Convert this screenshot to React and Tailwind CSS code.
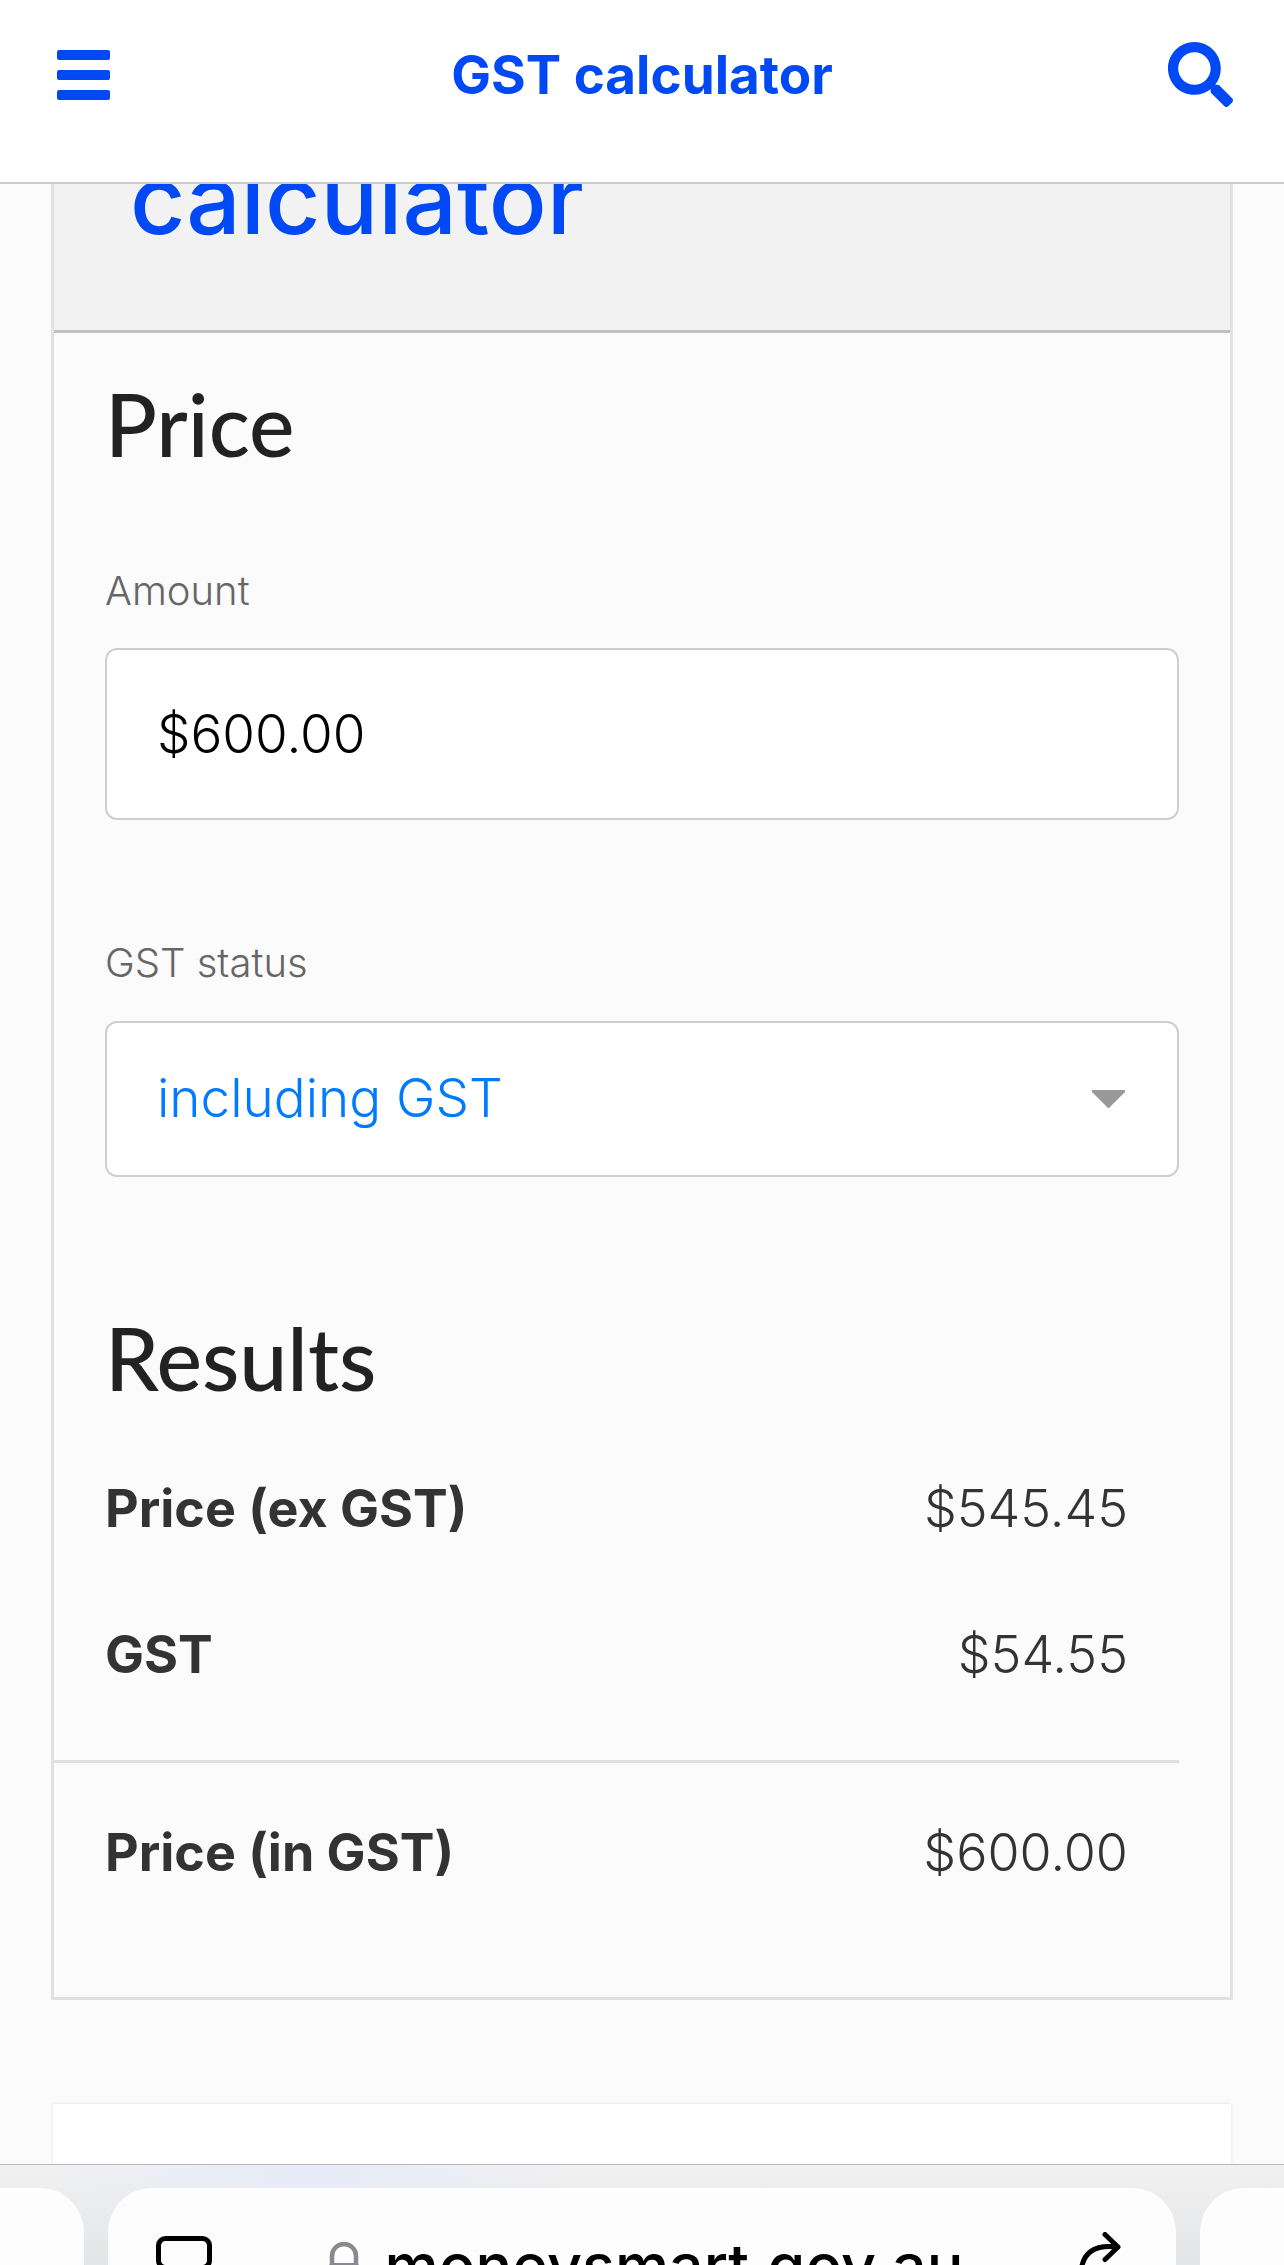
import { useState } from "react";
import { FaSearch } from "react-icons/fa";

const GST_RATE = 0.1;

function money(value) {
  return `$${value.toFixed(2)}`;
}

function Header() {
  return (
    <header className="grid shrink-0 grid-cols-[1fr_auto_1fr] items-center border-b-2 border-[#cccccc] bg-white px-[51px] pt-[42px] pb-[75px] text-[#0049f5]">
      <button type="button" aria-label="Menu" className="ml-1.5 justify-self-start">
        <svg width="53" height="50" viewBox="0 0 53 50" fill="currentColor">
          <rect width="53" height="10" rx="2" />
          <rect y="20" width="53" height="10" rx="2" />
          <rect y="40" width="53" height="10" rx="2" />
        </svg>
      </button>
      <p className="text-[53px] leading-[60px] font-bold">GST calculator</p>
      <button type="button" aria-label="Search" className="justify-self-end">
        <FaSearch className="size-[65px]" />
      </button>
    </header>
  );
}

function SectionTitle({ children }) {
  return (
    <h2 className="px-[51px] font-['Lato',sans-serif] text-[86px] leading-[96px] font-medium text-[#222222]">
      {children}
    </h2>
  );
}

function ResultsTable({ exGst, gst, inGst }) {
  return (
    <table className="mt-[71px] mr-[51px] mb-28 w-[calc(100%-51px)] border-collapse text-[52px] leading-[64px] text-[#333333]">
      <tbody>
        <tr>
          <th scope="row" className="pb-[41px] pl-[51px] text-left font-bold">Price (ex GST)</th>
          <td className="pr-[51px] pb-[41px] text-right font-light">{money(exGst)}</td>
        </tr>
        <tr>
          <th scope="row" className="pt-[41px] pb-[73px] pl-[51px] text-left font-bold">GST</th>
          <td className="pt-[41px] pr-[51px] pb-[73px] text-right font-light">{money(gst)}</td>
        </tr>
        <tr className="border-t-3 border-[#e1e1e1]">
          <th scope="row" className="pt-[58px] pl-[51px] text-left font-bold">Price (in GST)</th>
          <td className="pt-[58px] pr-[51px] text-right font-light">{money(inGst)}</td>
        </tr>
      </tbody>
    </table>
  );
}

function Calculator() {
  const [amount, setAmount] = useState("$600.00");
  const [status, setStatus] = useState("including");

  const price = parseFloat(amount.replace(/[^0-9.]/g, "")) || 0;
  const exGst = status === "including" ? price / (1 + GST_RATE) : price;
  const inGst = status === "including" ? price : price * (1 + GST_RATE);

  return (
    <section className="-mt-[33px] border-3 border-t-0 border-[#e1e1e1]">
      <div className="border-b-3 border-[#c0c0c0] bg-[#f2f2f2] px-[76px] pb-[83px]">
        <h1 className="text-[96px] leading-[96px] font-medium text-[#0049f5]">calculator</h1>
      </div>

      <div className="pt-[43px]">
        <SectionTitle>Price</SectionTitle>

        <form className="px-[51px]" onSubmit={(e) => e.preventDefault()}>
          <label htmlFor="amount" className="mt-[95px] block text-[40px] leading-[48px] font-light text-[#666666]">
            Amount
          </label>
          <input
            id="amount"
            inputMode="decimal"
            value={amount}
            onChange={(e) => setAmount(e.target.value)}
            className="mt-[33px] block h-[172px] w-full rounded-xl border-2 border-[#cfcfcf] bg-white px-[50px] text-[53px] font-light text-black focus:outline-none"
          />

          <label htmlFor="status" className="mt-[119px] block text-[40px] leading-[48px] font-light text-[#666666]">
            GST status
          </label>
          <div className="relative mt-[34px]">
            <select
              id="status"
              value={status}
              onChange={(e) => setStatus(e.target.value)}
              className="block h-[156px] w-full appearance-none rounded-xl border-2 border-[#cfcfcf] bg-white px-[50px] text-[53px] font-light text-[#007aff] focus:outline-none"
            >
              <option value="including">including GST</option>
              <option value="excluding">excluding GST</option>
            </select>
            <svg
              className="pointer-events-none absolute top-[69px] right-[54px]"
              width="33"
              height="18"
              viewBox="0 0 33 18"
              fill="#999999"
            >
              <path d="M0 0h33v2L17 18h-1L0 2z" />
            </svg>
          </div>
        </form>

        <div className="mt-[133px]">
          <SectionTitle>Results</SectionTitle>
        </div>
        <ResultsTable exGst={exGst} gst={inGst - exGst} inGst={inGst} />
      </div>
    </section>
  );
}

function AddressBar() {
  return (
    <footer className="flex h-[101px] shrink-0 gap-6 overflow-hidden border-t border-[#b9b9bd] bg-[radial-gradient(ellipse_260px_90px_at_24%_0%,#e6ebf8,transparent),linear-gradient(#f1f1f2,#e4e5e6)] pt-[23px]">
      <div className="h-36 w-[84px] shrink-0 rounded-tr-[44px] bg-[#fdfdfe]" />
      <div className="flex h-36 flex-1 items-start justify-between rounded-t-[44px] bg-[#fdfdfe] px-12">
        <button type="button" aria-label="Page settings" className="mt-12">
          <svg width="56" height="60" viewBox="0 0 56 60" fill="none" stroke="#000" strokeWidth="5" strokeLinecap="round">
            <rect x="2.5" y="2.5" width="51" height="29" rx="7" />
            <path d="M3 44h50M3 55h32" />
          </svg>
        </button>
        <div className="flex items-start gap-6">
          <svg className="mt-[54px]" width="34" height="54" viewBox="0 0 34 54">
            <path d="M5 26V14a12 12 0 0 1 24 0v12" fill="none" stroke="#8a8a8e" strokeWidth="4.5" />
            <rect x="1" y="21" width="32" height="28" rx="5" fill="#8a8a8e" />
          </svg>
          <a href="https://moneysmart.gov.au" className="mt-[42px] text-[61px] leading-[72px] font-medium text-black">
            moneysmart.gov.au
          </a>
        </div>
        <button type="button" aria-label="Reload" className="mt-11">
          <svg width="50" height="60" viewBox="0 0 50 60" fill="none" stroke="#000" strokeWidth="5" strokeLinecap="round" strokeLinejoin="round">
            <path d="M40 15C17 12 6 20 3.500 36M27 2.500l13 12.500-13 12.500" />
          </svg>
        </button>
      </div>
      <div className="h-36 w-[84px] shrink-0 rounded-tl-[44px] bg-[#fdfdfe]" />
    </footer>
  );
}

export default function App() {
  return (
    <div className="flex h-screen flex-col overflow-hidden bg-[#fbfbfb] font-['Inter',sans-serif]">
      <Header />
      <main className="min-h-0 flex-1 overflow-hidden px-[51px]">
        <Calculator />
        <section className="mx-0.5 mt-[104px] h-40 bg-white shadow-[0_0_3px_rgba(0,0,0,0.12)]" />
      </main>
      <AddressBar />
    </div>
  );
}
